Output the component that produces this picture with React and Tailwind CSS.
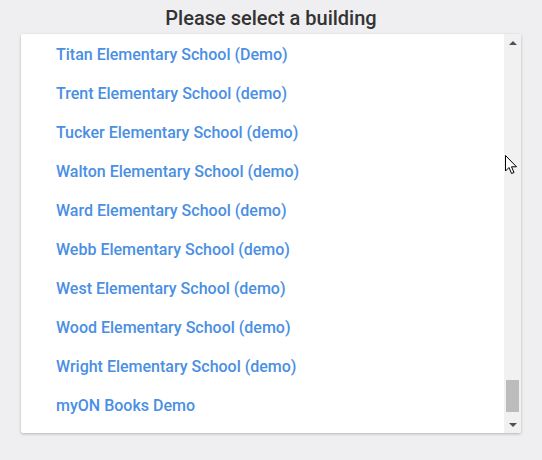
import React from "react";

const schools = [
  "Titan Elementary School (Demo)",
  "Trent Elementary School (demo)",
  "Tucker Elementary School (demo)",
  "Walton Elementary School (demo)",
  "Ward Elementary School (demo)",
  "Webb Elementary School (demo)",
  "West Elementary School (demo)",
  "Wood Elementary School (demo)",
  "Wright Elementary School (demo)",
  "myON Books Demo",
];

function Cursor() {
  return (
    <svg className="absolute left-[505px] top-[155px]" width="13" height="20" viewBox="0 0 13 20">
      <path d="M0.5 0.5 L0.5 16 L4 12.5 L6.5 18.5 L9 17.5 L6.5 11.8 L11.5 11.8 Z" fill="#fff" stroke="#000" strokeWidth="1" strokeLinejoin="round" />
    </svg>
  );
}

export default function App() {
  return (
    <div className="relative h-[460px] w-[542px] bg-[#efeff1] font-['Roboto',sans-serif]">
      <h1 className="pt-[5px] text-center text-[20px] leading-[26px] font-medium text-[#333]">Please select a building</h1>
      <div className="mx-[21px] mt-[3px] flex h-[399px] overflow-hidden rounded-[2px] bg-white shadow-[0_1px_3px_rgba(0,0,0,0.25)]">
        <ul className="flex-1 pt-[1px]">
          {schools.map((s) => (
            <li key={s} className="flex h-[39px] items-center pl-[35px] text-[16px] font-medium text-[#4a8fe4]">
              {s}
            </li>
          ))}
        </ul>
        <div className="flex w-[17px] flex-col items-center bg-[#f1f1f1]">
          <div className="flex h-[17px] w-full items-center justify-center">
            <div className="h-0 w-0 border-x-[4px] border-b-[4px] border-x-transparent border-b-[#505050]" />
          </div>
          <div className="flex-1" />
          <div className="mb-[4px] h-[32px] w-[13px] bg-[#bcbcbc]" />
          <div className="flex h-[17px] w-full items-center justify-center">
            <div className="h-0 w-0 border-x-[4px] border-t-[4px] border-x-transparent border-t-[#505050]" />
          </div>
        </div>
      </div>
      <Cursor />
    </div>
  );
}
